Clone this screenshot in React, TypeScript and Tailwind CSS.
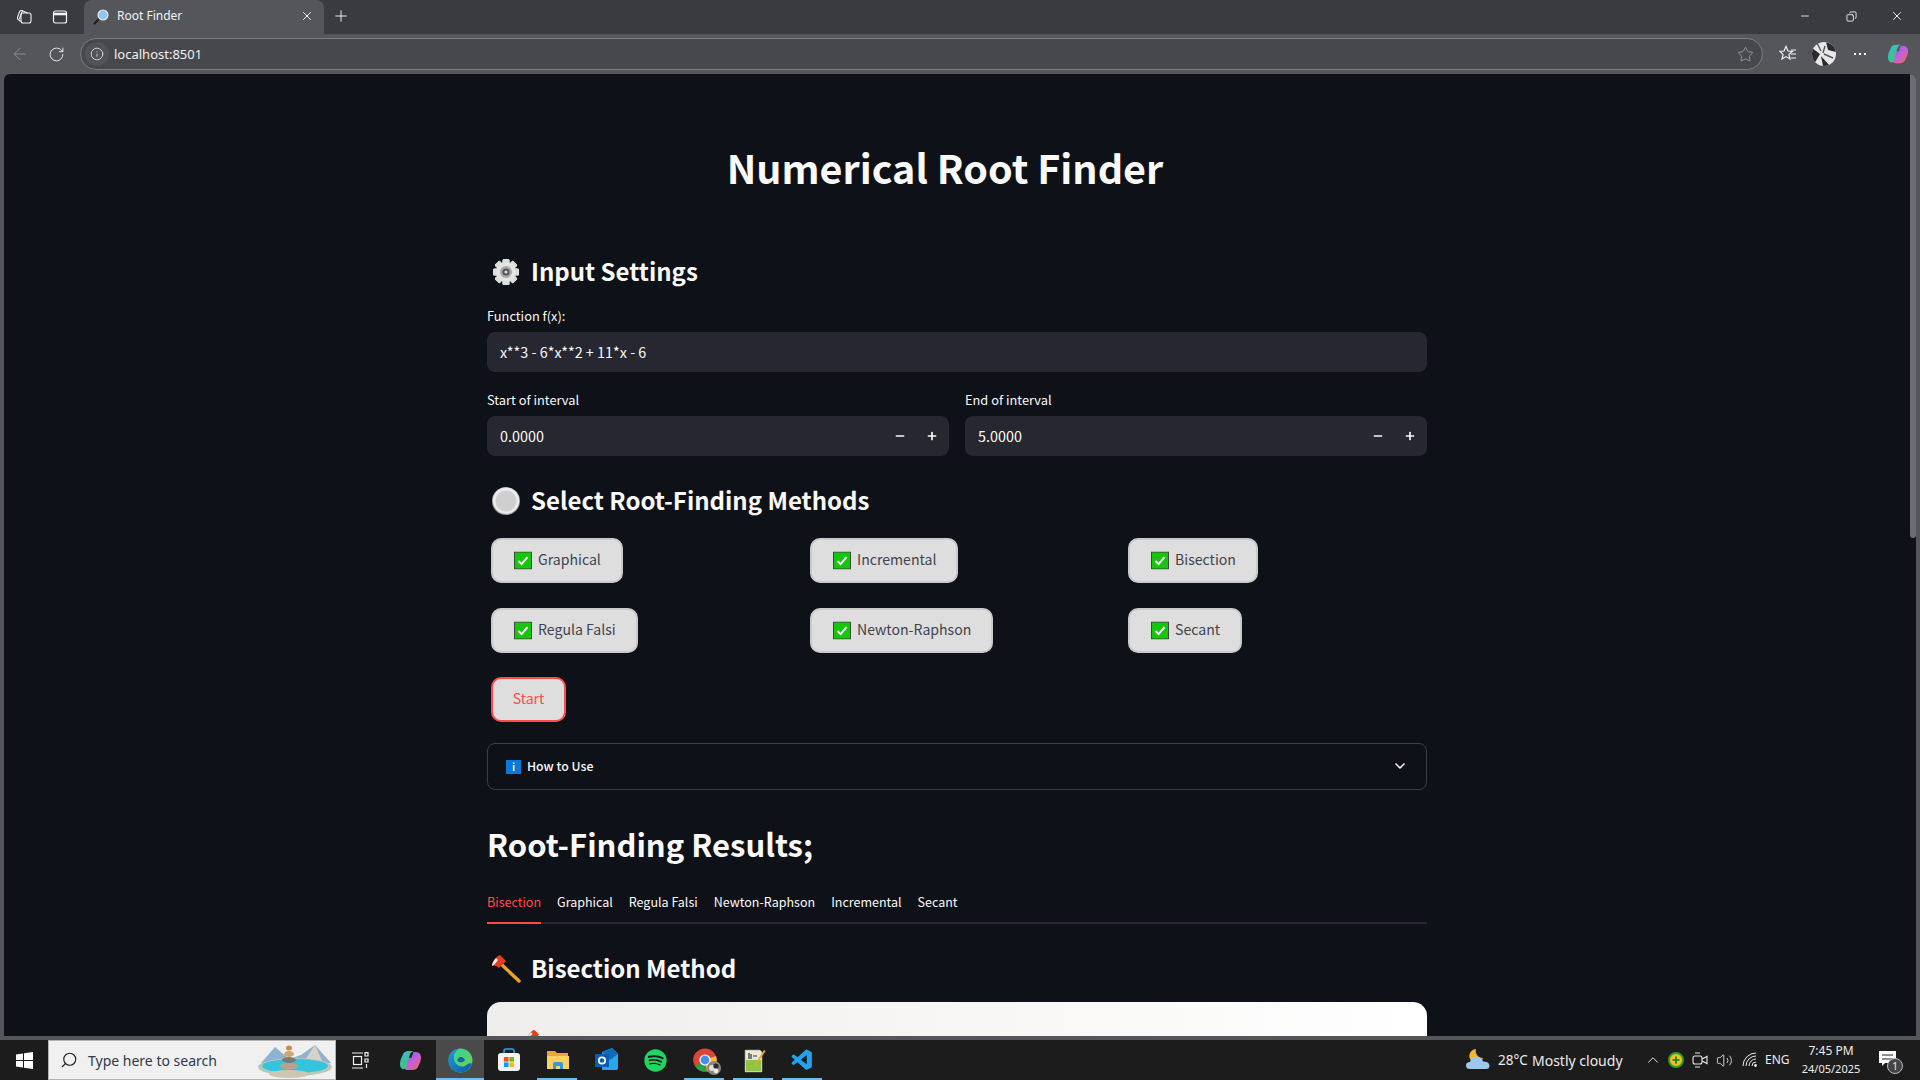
import React from "react";
import { ArrowLeft, RotateCw, Info, X, Plus, Minus, Star, ChevronDown, ChevronUp, Search, Volume2, Copy } from "lucide-react";
import { FaSpotify } from "react-icons/fa";
import { VscVscode } from "react-icons/vsc";

const ST = "font-['Noto_Sans_CJK_JP','Noto_Sans',sans-serif]";
const WIN = "font-['Noto_Sans','Open_Sans',sans-serif]";

function Gear() {
  const teeth = [0, 45, 90, 135, 180, 225, 270, 315];
  return (
    <svg width="30" height="30" viewBox="0 0 30 30" className="shrink-0">
      {teeth.map((a) => (
        <rect key={a} x="11.5" y="2" width="7" height="26" rx="1.5" fill="#dcdcdc" transform={`rotate(${a} 15 15)`} />
      ))}
      <circle cx="15" cy="15" r="10" fill="#e4e4e4" />
      <circle cx="15" cy="15" r="6" fill="#a8a8a8" />
      <circle cx="15" cy="15" r="3.6" fill="#555" />
      <circle cx="15" cy="15" r="1.6" fill="#d8d8d8" />
    </svg>
  );
}
function Radio() {
  return (
    <svg width="30" height="30" viewBox="0 0 30 30" className="shrink-0">
      <circle cx="15" cy="15" r="14" fill="#9a9a9a" />
      <circle cx="15" cy="14.6" r="13.2" fill="#ececec" />
      <circle cx="15" cy="15" r="10.5" fill="#cfcfcf" />
    </svg>
  );
}
function Axe({ size = 30 }: { size?: number }) {
  return (
    <svg width={size} height={size} viewBox="0 0 30 30" className="shrink-0">
      <path d="M9 9 L28 27" stroke="#e8a32a" strokeWidth="3.4" strokeLinecap="round" />
      <path d="M1 12 C1 7 5 3 9 1 L15 7 L8 14 C6 12 3 11 1 12Z" fill="#e2401c" />
      <path d="M1 12 C1 9 3 6 5 4 L7 6 C5 8 4 11 1 12Z" fill="#ececec" />
    </svg>
  );
}
function Check() {
  return (
    <svg width="18" height="18" viewBox="0 0 18 18" className="shrink-0 -translate-y-[0.5px]">
      <rect x="0.5" y="0.5" width="17" height="17" fill="#16c60c" stroke="#3c4a3c" />
      <path d="M4.5 9.5 L7.6 12.6 L13.5 5.6" fill="none" stroke="#fff" strokeWidth="2" />
    </svg>
  );
}
function H({ icon, children }: { icon: React.ReactNode; children: React.ReactNode }) {
  return (
    <div className="flex h-[40px] items-center pl-[4px]">
      <div className="flex w-[40px] shrink-0 items-center">{icon}</div>
      <h3 className="-translate-y-[1px] text-[24px] font-semibold leading-[40px] text-[#fafafa]">{children}</h3>
    </div>
  );
}
function Num({ v }: { v: string }) {
  return (
    <div className="flex h-[40px] items-center rounded-lg bg-[#262730] pl-[13px] text-[14.4px] text-[#fafafa]">
      <span className="flex-1">{v}</span>
      <span className="flex w-[32px] justify-center"><Minus size={12} strokeWidth={3.4} /></span>
      <span className="mr-[1px] flex w-[32px] justify-center"><Plus size={12} strokeWidth={3.4} /></span>
    </div>
  );
}
function Pick({ t }: { t: string }) {
  return (
    <div className="flex h-[45px] w-fit items-center gap-[6px] rounded-[10px] border-2 border-[#cacaca] bg-[#dedede] pl-[21px] pr-[20px] text-[14.1px] text-[#3f444f]">
      <Check />
      <span className="-translate-y-[1px]">{t}</span>
    </div>
  );
}

function Chrome() {
  return (
    <div className="flex h-[34px] items-end bg-[#3a3b3f] text-white">
      <div className="flex h-[34px] w-[84px] items-center">
        <svg width="18" height="18" viewBox="0 0 18 18" className="ml-[15px]" fill="none" stroke="#f2f2f2" strokeWidth="1.1">
          <rect x="6" y="5" width="10" height="10" rx="2" />
          <path d="M6 13.5 L3.2 11.5 Q2 10.5 2.6 9 L4.6 3.6 Q5.2 2.2 6.8 2.6 L12.5 5" />
          <path d="M4.2 11 L7.4 3" />
        </svg>
        <svg width="16" height="16" viewBox="0 0 16 16" className="ml-[19px]" fill="none" stroke="#f2f2f2" strokeWidth="1.2">
          <rect x="1.5" y="2" width="13" height="12" rx="2" />
          <path d="M1.5 5 H14.5" strokeWidth="2.6" />
        </svg>
      </div>
      <div className={`flex h-[34px] w-[240px] items-center rounded-t-[8px] bg-[#55565a] pl-[9px] pr-[9px] text-[12px] ${WIN}`}>
        <svg width="16" height="16" viewBox="0 0 16 16" className="shrink-0">
          <path d="M6 10 L1.5 14.5" stroke="#222" strokeWidth="2.4" strokeLinecap="round" />
          <circle cx="10" cy="6" r="5" fill="#8cc8f2" stroke="#e8e8e8" strokeWidth="1.2" />
        </svg>
        <span className="ml-[8px] flex-1 -translate-y-[1px] text-[#f2f2f2]">Root Finder</span>
        <X size={14} strokeWidth={1.6} className="mr-[1px] -translate-y-[1px]" />
      </div>
      <div className="flex h-[34px] w-[34px] -translate-y-[1px] items-center justify-center"><Plus size={18} strokeWidth={1.2} /></div>
      <div className="flex-1" />
      <div className="flex h-[32px] w-[46px] items-center justify-center self-start"><Minus size={12} strokeWidth={1.6} /></div>
      <div className="flex h-[32px] w-[46px] items-center justify-center self-start"><Copy size={11} strokeWidth={1.8} className="-scale-x-100" /></div>
      <div className="flex h-[32px] w-[46px] items-center justify-center self-start"><X size={14} strokeWidth={1.5} /></div>
    </div>
  );
}
function Toolbar() {
  return (
    <div className={`flex h-[40px] items-center bg-[#55565a] text-[#f0f0f0] ${WIN}`}>
      <div className="flex w-[38px] justify-start pl-[10px]"><ArrowLeft size={20} strokeWidth={1.1} className="text-[#8e8f92]" /></div>
      <div className="flex w-[36px] justify-center"><RotateCw size={17} strokeWidth={1.3} /></div>
      <div className="ml-[6px] flex h-[32px] w-[1683px] items-center rounded-full border border-[#7b7c80] bg-[#47484c] pl-[4px] pr-[8px]">
        <div className="flex h-[24px] w-[24px] items-center justify-center rounded-full bg-[#525357]"><Info size={14} strokeWidth={1.3} /></div>
        <span className="ml-[5px] flex-1 text-[13px] leading-none">localhost:8501</span>
        <Star size={17} strokeWidth={1.1} className="text-[#a9aaad]" />
      </div>
      <div className="ml-[16px] flex w-[18px] justify-center">
        <svg width="18" height="18" viewBox="0 0 18 18" fill="none" stroke="#f2f2f2" strokeWidth="1.2">
          <path d="M7 1.5 L9 6 L13.5 6.3 L10 9.4 L11 14 L7 11.6 L3 14 L4 9.4 L.8 6.3 L5 6Z" />
          <path d="M12 5 H17 M12 9 H17 M12 13 H17" />
        </svg>
      </div>
      <div className="ml-[15px] h-[24px] w-[24px] overflow-hidden rounded-full">
        <svg width="24" height="24" viewBox="0 0 24 24">
          <rect width="24" height="24" fill="#e8e8e8" />
          <path d="M0 6 L8 12 L2 22 L0 24Z M14 0 L24 4 L24 10 L16 8Z M9 14 L18 24 L11 24Z" fill="#2b2b2b" />
          <path d="M5 1 L9 9 M12 12 L21 16 M13 4 L11 11" stroke="#555" strokeWidth="1.4" />
        </svg>
      </div>
      <div className="ml-[14px] flex w-[20px] justify-center gap-[3px]">
        <i className="h-[2px] w-[2px] bg-white" /><i className="h-[2px] w-[2px] bg-white" /><i className="h-[2px] w-[2px] bg-white" />
      </div>
      <div className="ml-[17px]"><CopilotLogo size={22} id="a" /></div>
    </div>
  );
}
function CopilotLogo({ size, id }: { size: number; id: string }) {
  return (
    <svg width={size} height={size} viewBox="0 0 24 24">
      <defs>
        <linearGradient id={`cpa${id}`} x1="0" y1="0" x2="1" y2="1"><stop offset="0" stopColor="#3fb4f0" /><stop offset="0.6" stopColor="#3cc47c" /><stop offset="1" stopColor="#e8d23c" /></linearGradient>
        <linearGradient id={`cpb${id}`} x1="0" y1="0" x2="1" y2="1"><stop offset="0" stopColor="#5a6cf0" /><stop offset="0.5" stopColor="#c85ce0" /><stop offset="1" stopColor="#f0703c" /></linearGradient>
      </defs>
      <path d="M20 18 Q19 22 14 22 H9 Q6 22 6 19 L9 9 H13 L15 3 H17 Q23 3 23 9 Q23 13 20 18Z" fill={`url(#cpb${id})`} />
      <path d="M4 6 Q5 2 10 2 H15 Q12 3 11 7 L8.5 16 Q7 22 4 21 Q1 20 1 15 Q1 11 4 6Z" fill={`url(#cpa${id})`} />
    </svg>
  );
}

function Page() {
  return (
    <div className="flex-1 overflow-hidden bg-[#55565a] px-[4px] pb-[4px]">
      <div className={`relative flex h-full justify-start overflow-hidden rounded-t-[6px] bg-[#0e1117] ${ST}`}>
        <div className="ml-[483px] w-[940px] shrink-0 pt-[64px]">
          <h1 className="flex h-[60px] -translate-y-[1px] items-center justify-center pr-[24px] text-[39.5px] font-bold text-[#fafafa]">Numerical Root Finder</h1>
          <div className="mt-[54px]"><H icon={<Gear />}>Input Settings</H></div>
          <div className="mt-[15px] flex h-[20px] -translate-y-[1px] items-center text-[12.8px] text-[#fafafa]">Function f(x):</div>
          <div className="mt-[5px] flex h-[40px] items-center rounded-lg bg-[#262730] pl-[13px] text-[14.4px] text-[#fafafa]">x**3 - 6*x**2 + 11*x - 6</div>
          <div className="mt-[18px] grid grid-cols-2 gap-x-[16px]">
            <div>
              <div className="flex h-[20px] items-center text-[12.8px] text-[#fafafa]">Start of interval</div>
              <div className="mt-[6px]"><Num v="0.0000" /></div>
            </div>
            <div>
              <div className="flex h-[20px] items-center text-[12.8px] text-[#fafafa]">End of interval</div>
              <div className="mt-[6px]"><Num v="5.0000" /></div>
            </div>
          </div>
          <div className="mt-[25px]"><H icon={<Radio />}>Select Root-Finding Methods</H></div>
          <div className="mt-[17px] grid grid-cols-[319px_318px_1fr] gap-y-[25px] pl-[4px]">
            {["Graphical", "Incremental", "Bisection", "Regula Falsi", "Newton-Raphson", "Secant"].map((t) => <Pick key={t} t={t} />)}
          </div>
          <div className="ml-[4px] mt-[24px] flex h-[45px] w-[75px] items-center justify-center rounded-[10px] border-2 border-[#ff4b4b] bg-[#dedede] text-[14.1px] text-[#ff4b4b]"><span className="-translate-y-[1px]">Start</span></div>
          <div className="mt-[21px] flex h-[47px] items-center rounded-lg border border-[#3c3e44] pl-[18px] pr-[18px] text-[12.3px] font-medium text-[#fafafa]">
            <span className="flex h-[14px] w-[15px] items-center justify-center bg-[#0a78d7] text-[11px] leading-none text-white">i</span>
            <span className="ml-[6px] flex-1">How to Use</span>
            <ChevronDown size={16} strokeWidth={2.4} className="-translate-y-[1px]" />
          </div>
          <h2 className="mt-[30px] flex h-[50px] -translate-y-[1px] items-center text-[31px] font-semibold text-[#fafafa]">Root-Finding Results;</h2>
          <div className="mt-[12px] flex h-[42px] gap-[16px] border-b-2 border-[#262730] text-[12.5px] text-[#fafafa]">
            <div className="flex h-[42px] items-center border-b-2 border-[#ff4b4b] text-[#ff4b4b]">Bisection</div>
            {["Graphical", "Regula Falsi", "Newton-Raphson", "Incremental", "Secant"].map((t) => (
              <div key={t} className="flex h-[40px] items-center">{t}</div>
            ))}
          </div>
          <div className="mt-[25px]"><H icon={<Axe />}>Bisection Method</H></div>
          <div className="mt-[13px] h-[200px] rounded-t-[14px] bg-gradient-to-r from-[#f0eeec] to-white pl-[40px] pt-[27px]">
            <Axe size={24} />
          </div>
        </div>
        <div className="absolute right-0 top-0 h-[464px] w-[6px] rounded-b-[3px] bg-[#6b6d70]" />
      </div>
    </div>
  );
}

function Slot({ children, on, active, w = 49 }: { children: React.ReactNode; on?: boolean; active?: boolean; w?: number }) {
  return (
    <div style={{ width: w }} className={`relative flex h-[40px] shrink-0 items-center justify-center ${active ? "bg-[#4a4a4a]" : ""}`}>
      {children}
      {on && <div className="absolute bottom-0 left-[4px] right-[5px] h-[2px] bg-[#76b9ed]" />}
      {active && <div className="absolute bottom-0 left-0 right-0 h-[2px] bg-[#76b9ed]" />}
    </div>
  );
}

function Taskbar() {
  return (
    <div className={`flex h-[40px] items-center bg-[#1c1c1c] text-white ${WIN}`}>
      <div className="flex h-[40px] w-[48px] items-center justify-center">
        <svg width="17" height="17" viewBox="0 0 17 17" fill="#fff"><path d="M0 2.4 L7 1.4 V8 H0Z M8 1.2 L17 0 V8 H8Z M0 9 H7 V15.6 L0 14.6Z M8 9 H17 V17 L8 15.8Z" /></svg>
      </div>
      <div className="flex h-[40px] w-[288px] items-center overflow-hidden border border-[#b4b4b4] bg-[#f0f0f0] pl-[11px] text-[#2d3a4a]">
        <Search size={18} strokeWidth={1.5} className="-scale-x-100 text-[#222]" />
        <span className="ml-[10px] flex-1 whitespace-nowrap text-[14px]">Type here to search</span>
        <svg width="78" height="38" viewBox="0 0 78 38" className="shrink-0">
          <path d="M4 22 L18 6 L32 18 L44 14 L58 4 L74 22Z" fill="#8fb3cf" />
          <path d="M58 4 L66 22 L46 22Z" fill="#d9d2c8" />
          <ellipse cx="38" cy="26" rx="37" ry="9" fill="#b8c7bd" />
          <ellipse cx="38" cy="25" rx="33" ry="7" fill="#35c4dc" />
          <ellipse cx="32" cy="33" rx="20" ry="4" fill="#cfc6b2" />
          <ellipse cx="32" cy="25" rx="9" ry="3.5" fill="#b5a48c" />
          <ellipse cx="32" cy="19" rx="7" ry="3" fill="#7d7a74" />
          <ellipse cx="32" cy="13" rx="5" ry="3" fill="#c9a878" />
          <ellipse cx="32" cy="7" rx="3" ry="2.5" fill="#c98a4a" />
        </svg>
      </div>
      <div className="flex h-[40px] w-[48px] items-center justify-center">
        <svg width="18" height="17" viewBox="0 0 18 17" fill="none" stroke="#f2f2f2" strokeWidth="1.2">
          <path d="M1 1 H12 M1 16 H12 M14 0.6 H17 V4 H14Z M14 7 H17 V10 H14Z M15.5 12 V16" />
          <rect x="2.5" y="4.5" width="8" height="8" />
        </svg>
      </div>
      <div className="ml-[2px] mr-[2px]"><Slot w={48}><CopilotLogo size={23} id="b" /></Slot></div>
      <Slot w={48} active>
        <svg width="25" height="25" viewBox="0 0 24 24">
          <defs>
            <linearGradient id="ed1" x1="0" y1="0" x2="1" y2="1"><stop offset="0" stopColor="#2fd2a0" /><stop offset="1" stopColor="#6cd64a" /></linearGradient>
            <linearGradient id="ed2" x1="0" y1="0" x2="1" y2="1"><stop offset="0" stopColor="#1b9de2" /><stop offset="1" stopColor="#0c59a4" /></linearGradient>
          </defs>
          <circle cx="12" cy="12" r="11.5" fill="url(#ed1)" />
          <path d="M23 15 C21 20 17 23.5 12 23.5 C5 23.5 .5 18 .5 12 C.5 6 5 1 11 .5 C6 3 4 9 7 14 C9 18 15 19 18 16 C19 15 21 14 23 15Z" fill="url(#ed2)" />
          <path d="M9 12 C9 9 12 8 14 9 C16 10 17 12 15 13 C13 14 10 14 9 12Z" fill="#1b5fa8" />
        </svg>
      </Slot>
      <Slot>
        <svg width="24" height="24" viewBox="0 0 24 24">
          <path d="M7 6 V3 Q7 1 9 1 H15 Q17 1 17 3 V6" fill="none" stroke="#2aa6e8" strokeWidth="1.6" />
          <rect x="1" y="5" width="22" height="18" rx="3" fill="#f3f3f3" />
          <rect x="7" y="9" width="4.6" height="4.6" fill="#f25022" />
          <rect x="12.4" y="9" width="4.6" height="4.6" fill="#7fba00" />
          <rect x="7" y="14.4" width="4.6" height="4.6" fill="#00a4ef" />
          <rect x="12.4" y="14.4" width="4.6" height="4.6" fill="#ffb900" />
        </svg>
      </Slot>
      <Slot on>
        <svg width="24" height="22" viewBox="0 0 24 22">
          <path d="M1 2 H9 L11 4 H22 V20 H1Z" fill="#e8a92c" />
          <path d="M1 7 H23 V20 H1Z" fill="#f8d35e" />
          <path d="M7 20 V15 Q7 13 9 13 H15 Q17 13 17 15 V20 H14 V17 H10 V20Z" fill="#3a96dd" />
        </svg>
      </Slot>
      <Slot>
        <svg width="25" height="24" viewBox="0 0 25 24">
          <path d="M8 4 L18 0 L24 6 V20 Q24 22 22 22 H8Z" fill="#28a8ea" />
          <path d="M8 4 L18 0 L24 6 L16 12Z" fill="#0f6cbd" />
          <rect x="1" y="6" width="14" height="13" fill="#0a5cb0" />
          <circle cx="8" cy="12.5" r="3.2" fill="none" stroke="#fff" strokeWidth="1.8" />
        </svg>
      </Slot>
      <Slot><FaSpotify size={23} className="text-[#1ed760]" /></Slot>
      <Slot on>
        <div className="relative">
          <svg width="24" height="24" viewBox="0 0 24 24">
            <circle cx="12" cy="12" r="11.5" fill="#dc4437" />
            <path d="M12 12 L2 18 A11.5 11.5 0 0 1 3 4.5 Z" fill="#dc4437" />
            <path d="M12 12 L2 18 A11.5 11.5 0 0 0 14 23.4 Z" fill="#2f9e4f" />
            <path d="M12 12 L14 23.4 A11.5 11.5 0 0 0 23 8 Z" fill="#fbc02d" />
            <circle cx="12" cy="12" r="5.6" fill="#fff" />
            <circle cx="12" cy="12" r="4.4" fill="#4a8cf0" />
          </svg>
          <svg width="14" height="14" viewBox="0 0 14 14" className="absolute -bottom-[3px] -right-[4px]">
            <circle cx="7" cy="7" r="7" fill="#8c8580" />
            <circle cx="5" cy="7" r="3" fill="#e6e0da" />
            <circle cx="9" cy="5" r="2.6" fill="#2e2a28" />
            <circle cx="9" cy="10" r="2.4" fill="#efeae4" />
          </svg>
        </div>
      </Slot>
      <Slot on>
        <svg width="24" height="25" viewBox="0 0 24 25">
          <path d="M3 2 H18 L20 4 V24 H3Z" fill="#e9e9d8" stroke="#999" strokeWidth="0.6" />
          <rect x="4" y="12" width="15" height="11" fill="#8fc641" />
          <path d="M7 5 V11 M9 6 V11 M11 8 H15" stroke="#333" strokeWidth="1.2" />
          <path d="M22 2 L13 16 L12 19 L14.5 17 L23.5 3Z" fill="#e8a92c" />
        </svg>
      </Slot>
      <Slot on><VscVscode size={25} className="text-[#23a2ee]" /></Slot>
      <div className="flex-1" />
      <div className="flex h-[40px] items-center text-[14px] text-[#ececec]">
        <svg width="24" height="24" viewBox="0 0 24 24">
          <path d="M10 1 A7 7 0 1 0 17 10 A7 7 0 0 1 10 1Z" fill="#f2b632" />
          <path d="M4 21 Q0 21 0 17.5 Q0 14 4 14 Q5 9 11 9 Q16 9 17 13.5 Q23 13.5 23.5 17.5 Q23.5 21 20 21Z" fill="#9cc8ee" />
        </svg>
        <span className="ml-[8px] w-[34px] text-[13.5px]">28°C</span>
        <span className="w-[112px]">Mostly cloudy</span>
        <ChevronUp size={18} strokeWidth={1.3} />
        <div className="ml-[6px] flex h-[16px] w-[16px] items-center justify-center rounded-full border-[2px] border-[#2f9e2f] bg-[#f2c318] text-[#0d7a1f]"><Plus size={10} strokeWidth={4} /></div>
        <svg width="16" height="18" viewBox="0 0 16 18" fill="none" stroke="#e8e8e8" strokeWidth="1.1" className="ml-[8px]">
          <rect x="1" y="5" width="9" height="8" rx="2" /><path d="M10 8 L15 5.5 V12.5 L10 10 M3 2 H8 M3 16 H8" />
        </svg>
        <Volume2 size={17} strokeWidth={1.2} className="ml-[8px]" />
        <svg width="16" height="16" viewBox="0 0 16 16" fill="none" stroke="#e8e8e8" strokeWidth="1" className="ml-[9px]">
          <path d="M1 14 A13 13 0 0 1 14 1 M4 14 A10 10 0 0 1 14 4 M7 14 A7 7 0 0 1 14 7 M10 14 A4 4 0 0 1 14 10" />
          <circle cx="13.5" cy="13.5" r="1.4" fill="#e8e8e8" stroke="none" />
        </svg>
        <span className="ml-[7px] w-[36px] text-[12px]">ENG</span>
        <div className="flex w-[60px] flex-col items-center text-[11px] leading-[18px]"><span className="text-[12px]">7:45 PM</span><span>24/05/2025</span></div>
        <div className="relative ml-[18px] mr-[19px] h-[22px] w-[22px]">
          <svg width="18" height="16" viewBox="0 0 18 16" className="mt-[2px]"><path d="M0 0 H17 V12 H6 L3 15 V12 H0Z" fill="#fff" /><path d="M3 4 H14 M3 8 H14" stroke="#1c1c1c" /></svg>
          <span className="absolute -bottom-[3px] -right-[2px] flex h-[16px] w-[16px] items-center justify-center rounded-full border border-[#bbb] bg-[#444] text-[10px] leading-none">1</span>
        </div>
      </div>
    </div>
  );
}

export default function App() {
  return (
    <div className="flex h-screen w-full flex-col overflow-hidden bg-[#55565a]">
      <Chrome />
      <Toolbar />
      <Page />
      <Taskbar />
    </div>
  );
}
